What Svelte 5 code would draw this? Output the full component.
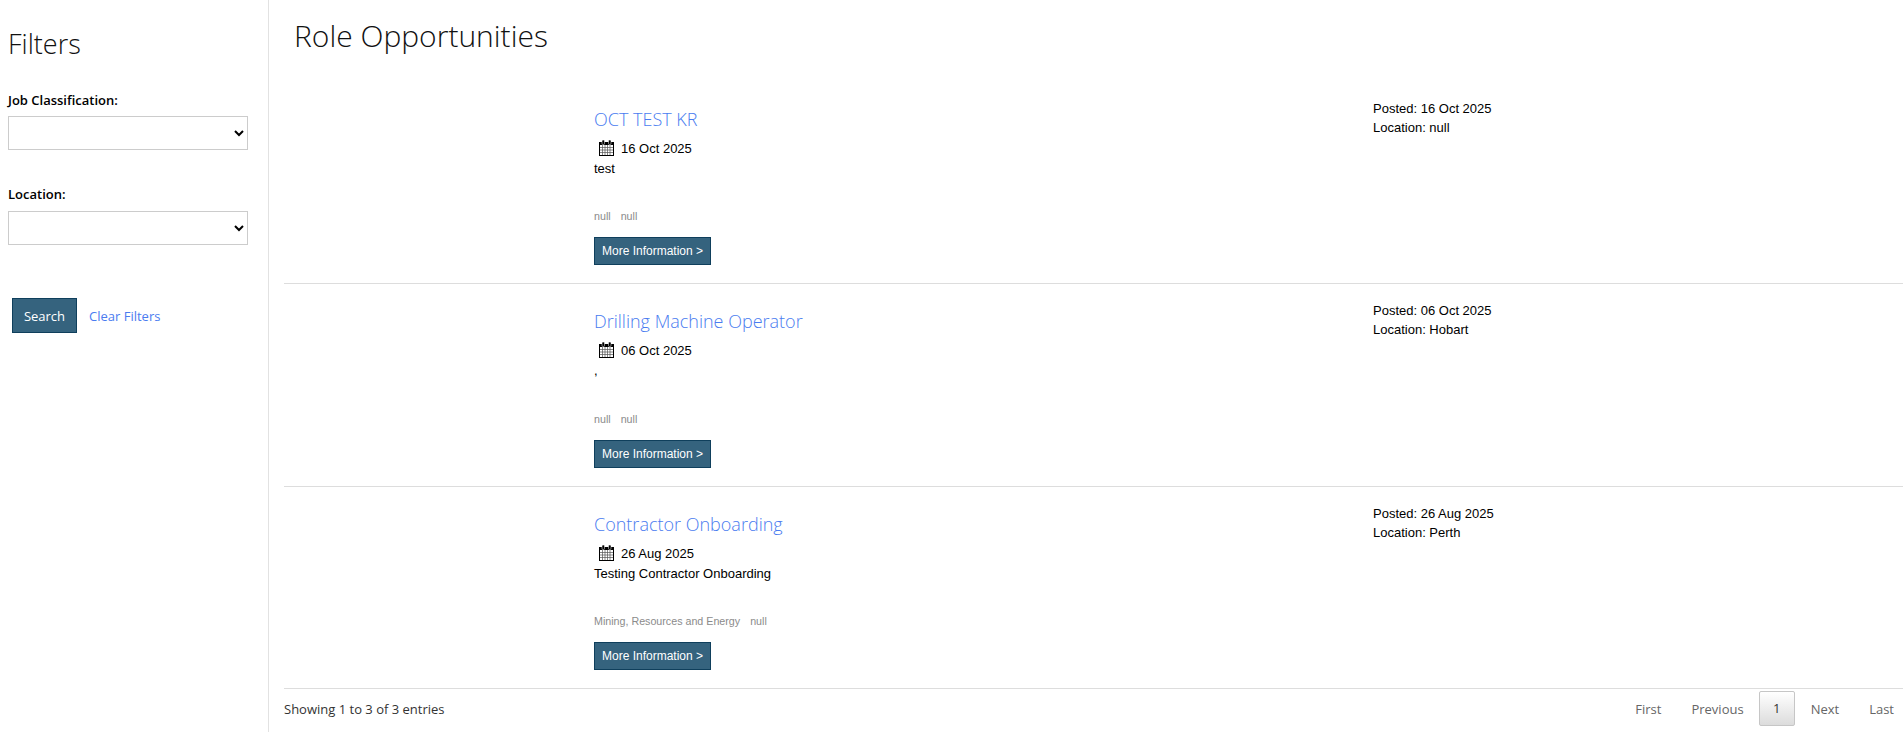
<script>
  const roles = [
    { title: "OCT TEST KR", date: "16 Oct 2025", desc: "test", tags: ["null", "null"], location: "null" },
    { title: "Drilling Machine Operator", date: "06 Oct 2025", desc: ",", tags: ["null", "null"], location: "Hobart" },
    { title: "Contractor Onboarding", date: "26 Aug 2025", desc: "Testing Contractor Onboarding", tags: ["Mining, Resources and Energy", "null"], location: "Perth" }
  ];
</script>

<div class="page">
  <aside class="sidebar">
    <h2>Filters</h2>
    <div class="field">
      <label for="classification">Job Classification:</label>
      <select id="classification"><option></option></select>
    </div>
    <div class="field">
      <label for="location">Location:</label>
      <select id="location"><option></option></select>
    </div>
    <div class="actions">
      <button class="search">Search</button>
      <a href="#clear">Clear Filters</a>
    </div>
  </aside>

  <main class="content">
    <h1>Role Opportunities</h1>
    <div class="list">
      {#each roles as role}
        <div class="row">
          <div class="blank"></div>
          <div class="info">
            <a class="title" href="#role">{role.title}</a>
            <div class="date">
              <svg width="15" height="16" viewBox="0 0 15 16" aria-hidden="true">
                <rect x="0.5" y="2.5" width="14" height="13" fill="#fff" stroke="#000" />
                <rect x="0" y="2" width="15" height="3" fill="#000" />
                <rect x="3" y="0" width="2.5" height="4.5" rx="1" fill="#000" stroke="#fff" stroke-width="0.5" />
                <rect x="9.5" y="0" width="2.5" height="4.5" rx="1" fill="#000" stroke="#fff" stroke-width="0.5" />
                <path d="M3.5 5v10M6 5v10M8.5 5v10M11 5v10M1 7.5h13M1 10h13M1 12.5h13" stroke="#555" stroke-width="0.7" fill="none" />
              </svg>
              <span>{role.date}</span>
            </div>
            <div class="desc">{role.desc}</div>
            <div class="tags">
              {#each role.tags as tag}<span>{tag}</span>{/each}
            </div>
            <button class="more">More Information &gt;</button>
          </div>
          <div class="meta">
            <div>Posted: {role.date}</div>
            <div>Location: {role.location}</div>
          </div>
        </div>
      {/each}
    </div>
    <div class="footer">
      <div class="count">Showing 1 to 3 of 3 entries</div>
      <div class="pager">
        <span>First</span>
        <span>Previous</span>
        <span class="current">1</span>
        <span class="next">Next</span>
        <span>Last</span>
      </div>
    </div>
  </main>
</div>

<style>
  :global(body) {
    background: #fff;
    font-family: "Open Sans", sans-serif;
    overflow: hidden;
  }

  .page {
    display: flex;
    height: 732px;
  }

  .sidebar {
    width: 269px;
    box-sizing: border-box;
    border-right: 1px solid #e2e2e2;
    padding: 27px 20px 0 8px;
    flex-shrink: 0;
  }

  h2 {
    margin: 0 0 30px;
    font-size: 27px;
    line-height: 34px;
    font-weight: 300;
    color: #111;
  }

  .field {
    margin-bottom: 35px;
  }

  label {
    display: block;
    font-size: 13px;
    font-weight: 600;
    line-height: 19px;
    margin-bottom: 6px;
    color: #000;
  }

  .field + .field label {
    margin-bottom: 7px;
  }

  select {
    display: block;
    width: 240px;
    height: 34px;
    box-sizing: border-box;
    background: #fff;
    border: 1px solid #ccc;
    border-radius: 0;
    font-size: 14px;
  }

  .actions {
    display: flex;
    align-items: center;
    gap: 12px;
    margin: 53px 0 0 4px;
  }

  .search {
    width: 65px;
    height: 35px;
    background: #35637e;
    border: 1px solid #0f3f5c;
    color: #fff;
    font-family: inherit;
    font-size: 13px;
    padding: 0;
  }

  .actions a {
    font-size: 13px;
    color: #4a7cf0;
    text-decoration: none;
  }

  .content {
    flex: 1;
    min-width: 0;
    padding: 0 0 0 15px;
  }

  h1 {
    margin: 0 0 0 10px;
    padding-top: 16px;
    font-size: 30px;
    line-height: 40px;
    font-weight: 300;
    color: #111;
  }

  .list {
    margin-top: 25.6px;
  }

  .row {
    display: grid;
    grid-template-columns: 310px 779px 1fr;
    height: 202.5px;
    box-sizing: border-box;
    border-bottom: 1px solid #ddd;
    font-family: "Liberation Sans", Arial, sans-serif;
    color: #000;
  }

  .info {
    padding-top: 25.1px;
    font-size: 13px;
  }

  .title {
    display: block;
    font-family: "Open Sans", sans-serif;
    font-size: 18px;
    font-weight: 300;
    line-height: 24px;
    color: #4a7cf0;
    text-decoration: none;
  }

  .date {
    display: flex;
    align-items: center;
    gap: 7px;
    margin: 9px 0 0 5px;
    font-size: 13px;
    line-height: 18px;
    height: 18px;
  }

  .date svg {
    margin-top: -2px;
  }

  .desc {
    margin-top: 2px;
    line-height: 18px;
    height: 18px;
    font-size: 13px;
  }

  .tags {
    display: flex;
    gap: 10px;
    margin-top: 31.5px;
    font-size: 10.7px;
    line-height: 14px;
    color: #8b8b8b;
  }

  .more {
    display: block;
    margin-top: 14px;
    width: 117px;
    height: 28px;
    padding: 0;
    background: #35637e;
    border: 1px solid #0f3f5c;
    color: #fff;
    font-family: inherit;
    font-size: 12px;
    font-weight: 400;
  }

  .meta {
    padding-top: 17.1px;
    font-size: 13px;
    line-height: 19px;
  }

  .footer {
    display: flex;
    justify-content: space-between;
    align-items: center;
    height: 39px;
    padding-right: 9px;
    font-size: 13px;
    color: #333;
  }

  .pager {
    display: flex;
    align-items: center;
    color: #666;
    font-size: 13px;
  }

  .pager span {
    padding: 0 15px;
    line-height: 32px;
  }

  .pager .next {
    padding-left: 16px;
  }

  .pager span:last-child {
    padding-right: 0;
  }

  .pager .current {
    box-sizing: border-box;
    height: 35px;
    line-height: 33px;
    width: 36px;
    padding: 0;
    text-align: center;
    border: 1px solid #c6c6c6;
    border-radius: 2px;
    background: linear-gradient(#fff, #dcdcdc);
    color: #333;
  }
</style>
